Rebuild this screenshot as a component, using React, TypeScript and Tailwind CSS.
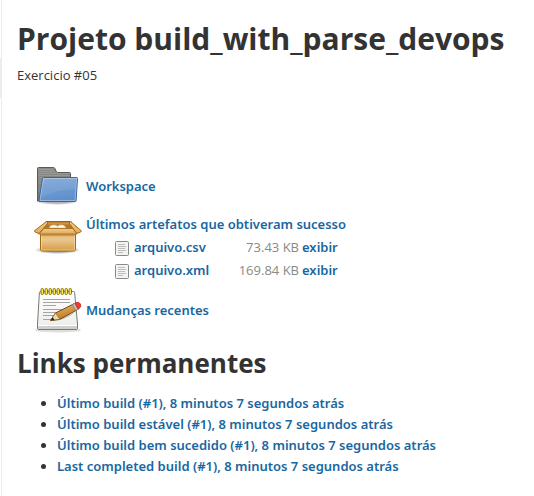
import React from "react";

function FolderIcon() {
  return (
    <svg aria-hidden="true" viewBox="0 0 48 48" className="size-12 shrink-0">
      <defs>
        <linearGradient id="folderBack" x1="0" y1="0" x2="0" y2="1">
          <stop offset="0" stopColor="#8c8c89" />
          <stop offset="1" stopColor="#70706e" />
        </linearGradient>
        <linearGradient id="folderFront" x1="0" y1="0" x2="0.2" y2="1">
          <stop offset="0" stopColor="#80a6d6" />
          <stop offset="1" stopColor="#5f90cd" />
        </linearGradient>
        <radialGradient id="folderShade">
          <stop offset="0.5" stopColor="#000" stopOpacity="0.3" />
          <stop offset="1" stopColor="#000" stopOpacity="0" />
        </radialGradient>
      </defs>
      <ellipse cx="23" cy="38.5" rx="22" ry="3.5" fill="url(#folderShade)" />
      <path d="M3.5 38V5.500q0-1 1-1h15q1 0 1.400 1l1.600 3.500q.3.500 1 .500h12q1 0 1 1V38z" fill="url(#folderBack)" stroke="#5a5a58" />
      <path d="M4.500 6.500h15M4.500 8.500h16M4.500 10.500h31M4.500 12.500h31M4.500 14.500h5M4.500 16.500h4M4.500 18.500h4M4.500 20.500h4M4.500 22.500h4M4.500 24.500h4M4.500 26.500h3M4.500 28.500h3M4.500 30.500h3M4.500 32.500h3M4.500 34.500h3" stroke="#b0b0ac" strokeOpacity="0.45" />
      <path d="M8.500 15.500q.1-1 1-1h33q1 0 1 1l-1.400 21.800q-.1 1.200-1.200 1.200H6q-1.200 0-1-1.200z" fill="url(#folderFront)" stroke="#3465a4" />
      <path d="M9.500 15.500h33l-1.400 22H6z" fill="none" stroke="#fff" strokeOpacity="0.35" />
      <path d="M9.500 16h32l-.8 10Q19 27 7.500 35z" fill="#fff" fillOpacity="0.08" />
    </svg>
  );
}

function PackageIcon() {
  return (
    <svg aria-hidden="true" viewBox="0 0 48 48" className="size-12 shrink-0">
      <defs>
        <linearGradient id="boxFront" x1="0" y1="0" x2="0" y2="1">
          <stop offset="0" stopColor="#d09a45" />
          <stop offset="0.45" stopColor="#ebc88f" />
          <stop offset="1" stopColor="#d39c46" />
        </linearGradient>
        <linearGradient id="boxFlap" x1="0" y1="0" x2="0" y2="1">
          <stop offset="0" stopColor="#efcb8f" />
          <stop offset="1" stopColor="#dfab5c" />
        </linearGradient>
        <radialGradient id="boxShade">
          <stop offset="0.5" stopColor="#000" stopOpacity="0.4" />
          <stop offset="1" stopColor="#000" stopOpacity="0" />
        </radialGradient>
      </defs>
      <ellipse cx="23.5" cy="37" rx="23" ry="4" fill="url(#boxShade)" />
      <path d="M12 8.500h25l4 8H8z" fill="#b5771f" stroke="#9b6210" />
      <path d="M14 9.500h22v2H14z" fill="#cf9540" />
      <path d="M15.500 15q0-3 4-3 2.500 0 4 1.200 2-1.500 4.500-1.200 3.500.3 3.500 3z" fill="#f4f4f2" stroke="#cfcfca" strokeWidth=".6" />
      <path d="M6.500 16.500h35v19.500q0 2-2 2h-31q-2 0-2-2z" fill="url(#boxFront)" stroke="#a36a12" />
      <path d="M7.500 19.500h33v17.500h-33z" fill="none" stroke="#fbe0b0" strokeOpacity="0.55" />
      <path d="M7 21h34v2H7z" fill="#8f5902" fillOpacity="0.3" />
      <path d="M10 15.500h29l4 5.500H4.500z" fill="url(#boxFlap)" stroke="#b27622" />
      <path d="M12.500 8.500L.8 17.500q-.8 1 .3 1.500l4 1.500L14 10z" fill="url(#boxFlap)" stroke="#a36a12" />
      <path d="M36.500 8.500L47 17.500q.7 1-.3 1.500l-4 1.500L35 10z" fill="url(#boxFlap)" stroke="#a36a12" />
    </svg>
  );
}

function NotepadIcon() {
  return (
    <svg aria-hidden="true" viewBox="0 0 48 48" className="size-12 shrink-0">
      <defs>
        <linearGradient id="paper" x1="0" y1="0" x2="0" y2="1">
          <stop offset="0" stopColor="#fff" />
          <stop offset="1" stopColor="#ececea" />
        </linearGradient>
        <linearGradient id="pencil" x1="0" y1="0" x2="0.5" y2="1">
          <stop offset="0" stopColor="#f0c88a" />
          <stop offset="1" stopColor="#b97118" />
        </linearGradient>
      </defs>
      <ellipse cx="24" cy="43" rx="23" ry="2.500" fill="#000" fillOpacity="0.13" />
      <path d="M6.500 4.500h33q1 0 1.100 1L43.500 37v4q0 1.500-1.500 1.500H5Q3.500 42.500 3.500 41v-4L5.400 5.500q.1-1 1.100-1z" fill="url(#paper)" stroke="#777975" />
      <path d="M4 38.500h39v3.500H4z" fill="#cfd0cd" />
      <path d="M4 38.500h39" stroke="#fff" />
      <path d="M9 12.500h27M9 15.500h27M9 18.500h13M9 22.500h26M9 25.500h22M9 28.500h18M9 32.500h9" stroke="#a4a5a2" />
      <g fill="#fce94f" stroke="#8c7400">
        <rect x="7" y="1.500" width="2.500" height="6" rx="1.200" />
        <rect x="11" y="1.500" width="2.500" height="6" rx="1.200" />
        <rect x="15" y="1.500" width="2.500" height="6" rx="1.200" />
        <rect x="19" y="1.500" width="2.500" height="6" rx="1.200" />
        <rect x="23" y="1.500" width="2.500" height="6" rx="1.200" />
        <rect x="27" y="1.500" width="2.500" height="6" rx="1.200" />
        <rect x="31" y="1.500" width="2.500" height="6" rx="1.200" />
        <rect x="35" y="1.500" width="2.500" height="6" rx="1.200" />
      </g>
      <path d="M17 34q11 1 25-9l-15 6z" fill="#000" fillOpacity="0.2" />
      <path d="M16.500 33.500l5-7.500L40 16.800l3.200 6L26 32.200z" fill="url(#pencil)" stroke="#7d480a" />
      <path d="M16.500 33.500l5-7.500 4.500 6.200z" fill="#edd7ae" stroke="#8f5902" strokeWidth=".6" />
      <path d="M16.500 33.500l2.200-3.200 1.900 2.600z" fill="#222" />
      <path d="M38.500 17.500l2.500-1.200 3.200 5.900-2.500 1.300z" fill="#c4c6c2" stroke="#777" strokeWidth=".7" />
      <path d="M41 16.300l2-.9q2.200-.6 3.400 1.600 1 2.300-.5 3.800l-1.700 1.400z" fill="#ef3b35" stroke="#c42020" strokeWidth=".8" />
    </svg>
  );
}

function FileIcon() {
  return (
    <svg aria-hidden="true" viewBox="0 0 16 16" className="size-4 shrink-0">
      <rect x=".5" y="1.500" width="13" height="14" rx="1" fill="#f3f3f2" stroke="#888a85" />
      <path d="M3 4.500h7M3 6.500h8M3 8.500h7M3 10.500h8M3 12.500h5" stroke="#bdbebb" />
    </svg>
  );
}

function Anchor({ children }: { children: React.ReactNode }) {
  return (
    <a href="#" className="font-['Noto_Sans',sans-serif] font-semibold text-[#1967a0] hover:underline">
      {children}
    </a>
  );
}

const artifacts = [
  { name: "arquivo.csv", size: "73.43 KB" },
  { name: "arquivo.xml", size: "169.84 KB" },
];

const builds = [
  "Último build (#1), 8 minutos 7 segundos atrás",
  "Último build estável (#1), 8 minutos 7 segundos atrás",
  "Último build bem sucedido (#1), 8 minutos 7 segundos atrás",
  "Last completed build (#1), 8 minutos 7 segundos atrás",
];

export default function App() {
  return (
    <div className="flex min-h-screen bg-white font-['Open_Sans','Noto_Sans',sans-serif] text-[13px] text-[#333]">
      <div className="w-px shrink-0 pt-[58px]">
        <div className="h-10 bg-[#e8edf2]" />
      </div>
      <main className="min-w-0 flex-1 border-l border-[#ececec] px-[15px] pt-[17px] pb-2">
        <h1 className="text-[30px] leading-[44px] font-bold">Projeto build_with_parse_devops</h1>
        <p className="mt-1 leading-5">Exercicio #05</p>

        <div className="mt-[76px] flex flex-col pl-[17px]">
          <div className="flex h-[52px] items-center gap-1">
            <FolderIcon />
            <Anchor>Workspace</Anchor>
          </div>
          <div className="flex h-[72px] gap-1">
            <PackageIcon />
            <div>
              <div className="leading-[23px]">
                <Anchor>Últimos artefatos que obtiveram sucesso</Anchor>
              </div>
              <table className="ml-[29px]">
                <tbody>
                  {artifacts.map((file) => (
                    <tr key={file.name} className="h-[23px] leading-[23px]">
                      <td className="w-[19px]">
                        <FileIcon />
                      </td>
                      <td className="w-[88px]">
                        <Anchor>{file.name}</Anchor>
                      </td>
                      <td className="w-[77px] text-right text-[#888a85]">{file.size}</td>
                      <td className="pl-[3px]">
                        <Anchor>exibir</Anchor>
                      </td>
                    </tr>
                  ))}
                </tbody>
              </table>
            </div>
          </div>
          <div className="flex h-[52px] items-center gap-1">
            <NotepadIcon />
            <Anchor>Mudanças recentes</Anchor>
          </div>
        </div>

        <h2 className="mt-2 text-[26px] leading-[36px] font-bold">Links permanentes</h2>
        <ul className="mt-3 list-disc pl-10 leading-[21px]">
          {builds.map((label) => (
            <li key={label}>
              <Anchor>{label}</Anchor>
            </li>
          ))}
        </ul>
      </main>
    </div>
  );
}
